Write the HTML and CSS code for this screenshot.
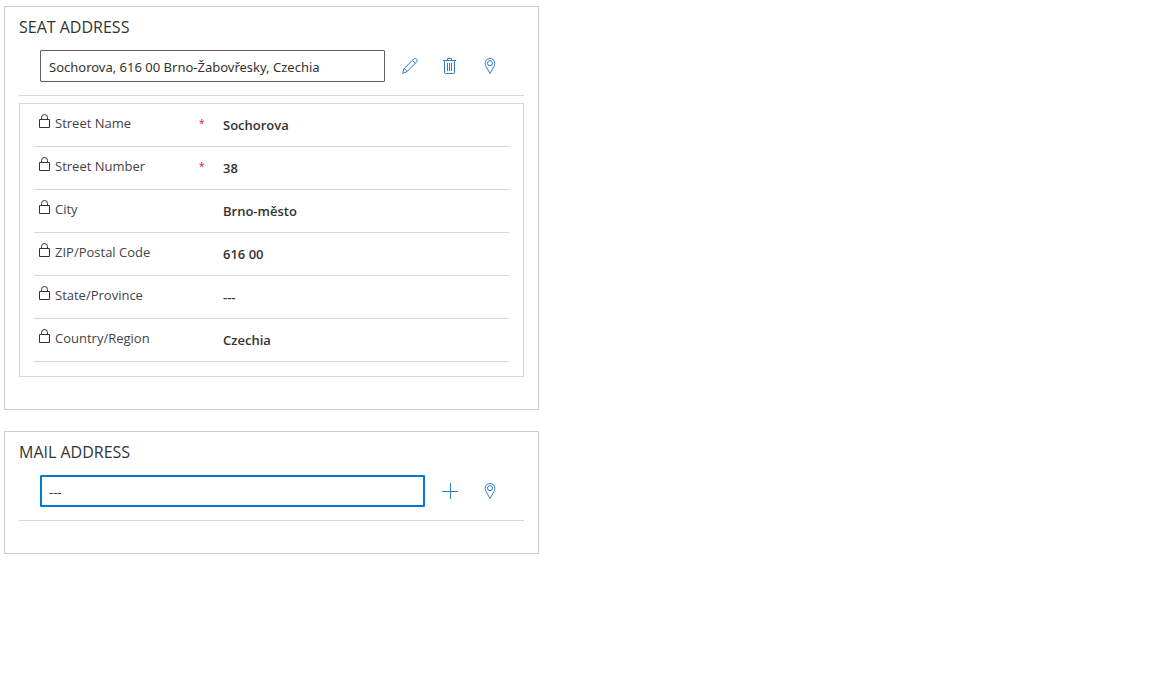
FILE: index.html
```html
<!DOCTYPE html>
<html lang="en">
<head>
<meta charset="utf-8">
<meta name="viewport" content="width=device-width, initial-scale=1">
<title>Addresses</title>
<link rel="stylesheet" href="styles.css">
</head>
<body>
<svg class="sprite" aria-hidden="true">
  <symbol id="lock" viewBox="0 0 12 16"><path d="M.5 6.500h10v8h-10zM2.500 6.500V4.500a3 3 0 0 1 6 0v2"/></symbol>
  <symbol id="pin" viewBox="0 0 16 16"><path d="M8 15.500L4 8.500C3.200 7.100 3.200 5.500 3.200 5a4.800 4.500 0 0 1 9.600 0c0 .5 0 2.100-.8 3.500z"/><circle cx="8" cy="5.200" r="2.500"/></symbol>
</svg>
<main class="form">
  <section class="card card-seat">
    <h2 class="title">SEAT ADDRESS</h2>
    <div class="lookup">
      <input class="address" type="text" aria-label="Seat address" value="Sochorova, 616 00 Brno-Žabovřesky, Czechia">
      <button class="action" type="button" aria-label="Edit"><svg class="icon" viewBox="0 0 16 16"><path d="M.6 15.400l1.200-4.600L11.700 1.200c1-1 2.100-.8 2.800-.1s.9 1.900 0 2.900L4.700 13.900zM1.800 10.800c1.600.1 2.800 1.300 2.900 3.100M10.500 2.300l2.900 2.900"/></svg></button>
      <button class="action" type="button" aria-label="Delete"><svg class="icon" viewBox="0 0 16 16"><path d="M1 2.500h13M5.500 2.500v-2h4v2M2.500 2.500v12q0 1 1 1h8q1 0 1-1v-12M5.500 5v8M7.500 5v8M9.500 5v8"/></svg></button>
      <button class="action" type="button" aria-label="Show on map"><svg class="icon"><use href="#pin"/></svg></button>
    </div>
    <div class="details">
      <div class="field">
        <label class="label" for="street"><svg class="lock"><use href="#lock"/></svg>Street Name</label>
        <span class="required">*</span>
        <input class="value" id="street" readonly value="Sochorova">
      </div>
      <div class="field">
        <label class="label" for="number"><svg class="lock"><use href="#lock"/></svg>Street Number</label>
        <span class="required">*</span>
        <input class="value" id="number" readonly value="38">
      </div>
      <div class="field">
        <label class="label" for="city"><svg class="lock"><use href="#lock"/></svg>City</label>
        <input class="value" id="city" readonly value="Brno-město">
      </div>
      <div class="field">
        <label class="label" for="zip"><svg class="lock"><use href="#lock"/></svg>ZIP/Postal Code</label>
        <input class="value" id="zip" readonly value="616 00">
      </div>
      <div class="field">
        <label class="label" for="state"><svg class="lock"><use href="#lock"/></svg>State/Province</label>
        <input class="value" id="state" readonly value="---">
      </div>
      <div class="field">
        <label class="label" for="country"><svg class="lock"><use href="#lock"/></svg>Country/Region</label>
        <input class="value" id="country" readonly value="Czechia">
      </div>
    </div>
  </section>
  <section class="card card-mail">
    <h2 class="title">MAIL ADDRESS</h2>
    <div class="lookup">
      <input class="address address-active" type="text" aria-label="Mail address" value="---">
      <button class="action" type="button" aria-label="Add"><svg class="icon" viewBox="0 0 16 16"><path d="M0 8.500h16M8.500 0v16"/></svg></button>
      <button class="action" type="button" aria-label="Show on map"><svg class="icon"><use href="#pin"/></svg></button>
    </div>
  </section>
</main>
</body>
</html>
```
FILE: styles.css
```css
* { box-sizing: border-box; }
body {
  margin: 0;
  padding: 6px 4px;
  background: #fff;
  color: #333;
  font: 13px/20px "Open Sans", "Noto Sans", sans-serif;
}
.sprite { display: none; }
.form {
  display: grid;
  gap: 21px;
  max-width: 535px;
}
.card {
  padding: 9px 14px 32px;
  border: 1px solid #ccc;
}
.title {
  margin: 0 0 11px;
  font-size: 16px;
  font-weight: 400;
  line-height: 23px;
}
.lookup {
  display: flex;
  padding: 0 14px 13px 21px;
  border-bottom: 1px solid #d6d6d6;
}
.address {
  flex: 1;
  min-width: 0;
  height: 32px;
  margin-right: 5px;
  padding: 2px 8px 0;
  border: 1px solid #605e5c;
  border-radius: 1px;
  outline: 0;
  background: #fff;
  color: #333;
  font: 13px/20px "Noto Sans", "Open Sans", sans-serif;
}
.address-active {
  padding: 2px 7px 0;
  border: 2px solid #0078d4;
}
.action {
  display: grid;
  place-items: center;
  width: 40px;
  padding: 0;
  border: 0;
  background: none;
  cursor: pointer;
}
.icon {
  width: 16px;
  height: 16px;
  fill: none;
  stroke: #2b7cd3;
}
.details {
  margin-top: 7px;
  padding: 0 14px 14px;
  border: 1px solid #d6d6d6;
}
.field {
  display: grid;
  grid-template-columns: 165px 16px 1fr;
  height: 43px;
  border-bottom: 1px solid #d6d6d6;
}
.label {
  display: flex;
  gap: 4px;
  padding: 9px 0 0 5px;
  color: #444;
}
.lock {
  width: 12px;
  height: 16px;
  fill: none;
  stroke: #333;
}
.required {
  padding-top: 9px;
  color: #e00b1c;
  font-size: 10px;
}
.value {
  grid-column: 3;
  min-width: 0;
  padding: 0 8px;
  border: 0;
  outline: 0;
  background: none;
  color: #333;
  font: inherit;
  font-weight: 600;
}
```
